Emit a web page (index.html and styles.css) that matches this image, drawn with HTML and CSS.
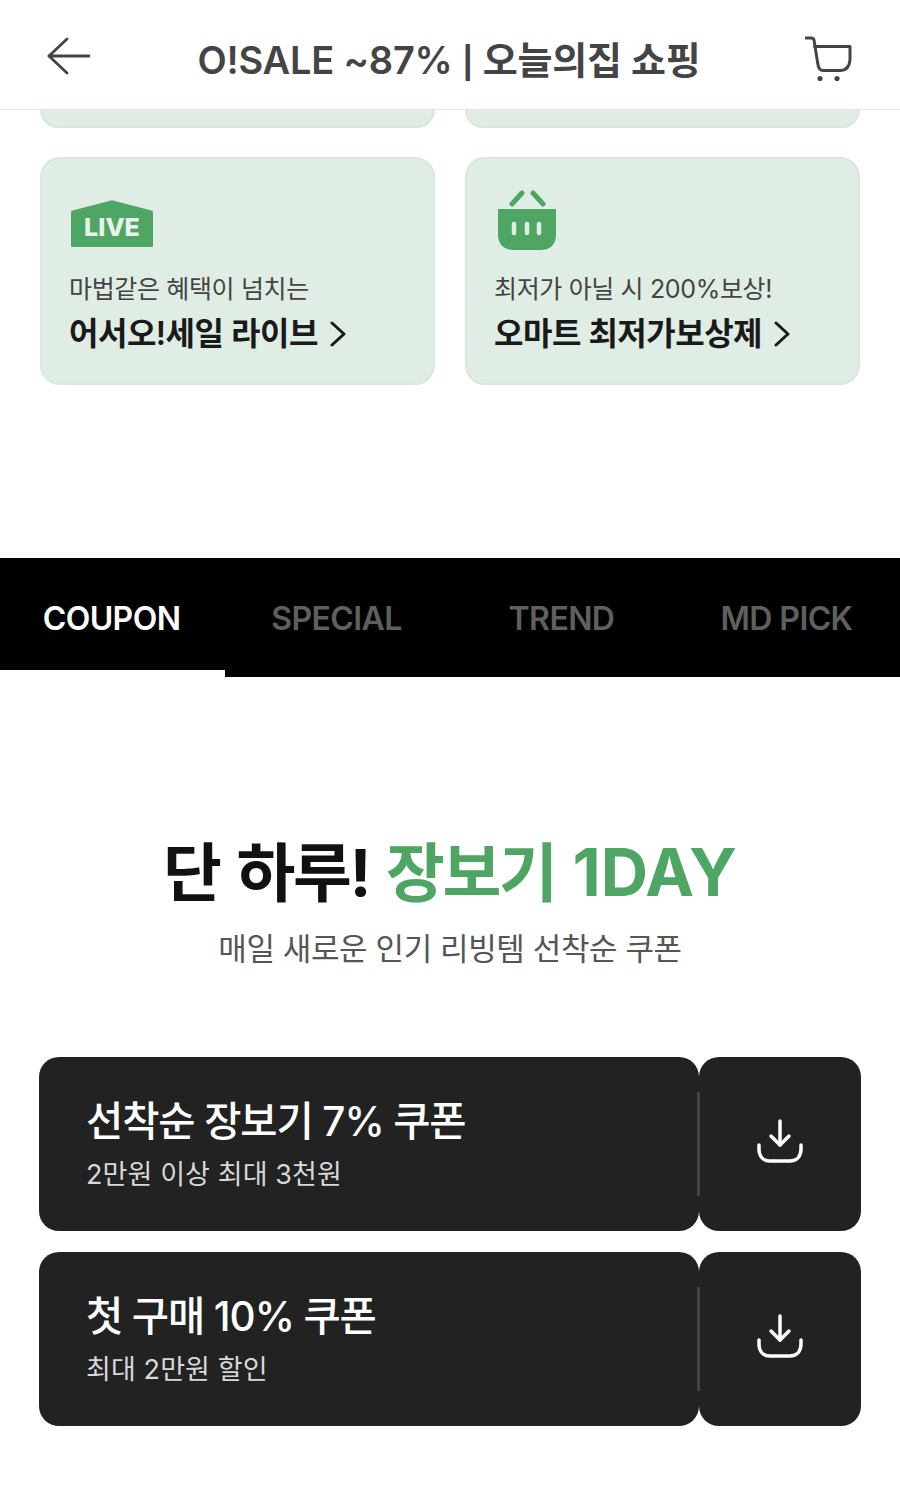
FILE: index.html
```html
<!DOCTYPE html>
<html lang="ko">
<head>
    <meta charset="UTF-8">
    <meta name="viewport" content="width=device-width, initial-scale=1.0">
    <title>O!SALE ~87% | 오늘의집 쇼핑</title>
    <link rel="stylesheet" href="styles.css">
</head>
<body>
    <!-- Top bar -->
    <header class="topbar">
        <svg class="icon-back" width="46" height="40" viewBox="0 0 46 40" fill="none" stroke="#444" stroke-width="2.800" stroke-linecap="round" stroke-linejoin="round">
            <path d="M42 21H2"/>
            <path d="M20 4L2 21l18 17"/>
        </svg>
        <h1 class="topbar-title">O!SALE ~87% <span class="title-pipe">|</span> 오늘의집 쇼핑</h1>
        <svg class="icon-cart" width="48" height="48" viewBox="0 0 48 48" fill="none" stroke="#444" stroke-width="3" stroke-linecap="round" stroke-linejoin="round">
            <path d="M9.500 13.500H45V27Q44 37 36 37.500H18Q14 37.500 13 32L9 7Q8.500 5 6 5H1"/>
            <circle cx="15" cy="45.500" r="2.600" fill="#444" stroke="none"/>
            <circle cx="32" cy="45.500" r="2.600" fill="#444" stroke="none"/>
        </svg>
    </header>

    <!-- Benefit cards, first row is scrolled under the top bar -->
    <section class="benefits">
        <div class="benefit-cut">
            <div class="benefit-stub"></div>
            <div class="benefit-stub"></div>
        </div>
        <div class="benefit-row">
            <a class="benefit-card">
                <div class="benefit-icon">
                    <svg class="icon-live" width="82" height="47" viewBox="0 0 82 47">
                        <path d="M40 .5L1.500 10.500C.5 10.800 0 11.300 0 12.500V45.500C0 46.500.5 47 1.500 47H80.500C81.500 47 82 46.500 82 45.500V12.500C82 11.300 81.500 10.800 80.500 10.500L42 .5C41.300.3 40.700.3 40 .5Z" fill="#4fa564"/>
                        <text class="live-text" x="41" y="36" text-anchor="middle">LIVE</text>
                    </svg>
                </div>
                <p class="benefit-sub">마법같은 혜택이 넘치는</p>
                <p class="benefit-name">어서오!세일 라이브
                    <svg class="icon-chevron" width="16" height="26" viewBox="0 0 16 26" fill="none" stroke="#1a1a1a" stroke-width="3" stroke-linecap="round" stroke-linejoin="round"><path d="M2 2l12 11L2 24"/></svg>
                </p>
            </a>
            <a class="benefit-card">
                <div class="benefit-icon">
                    <svg class="icon-basket" width="60" height="61" viewBox="0 0 60 61">
                        <path d="M15 14L25 3M46 14L36 3" stroke="#4fa564" stroke-width="5" stroke-linecap="round" fill="none"/>
                        <path d="M1 19H59V45C59 54 53 60 44 60H16C7 60 1 54 1 45Z" fill="#4fa564"/>
                        <path d="M17 34V43M30 34V43M42 34V43" stroke="#e0ede5" stroke-width="4.500" stroke-linecap="round" fill="none"/>
                    </svg>
                </div>
                <p class="benefit-sub">최저가 아닐 시 200%보상!</p>
                <p class="benefit-name">오마트 최저가보상제
                    <svg class="icon-chevron" width="16" height="26" viewBox="0 0 16 26" fill="none" stroke="#1a1a1a" stroke-width="3" stroke-linecap="round" stroke-linejoin="round"><path d="M2 2l12 11L2 24"/></svg>
                </p>
            </a>
        </div>
    </section>

    <!-- Tabs -->
    <nav class="tabs">
        <a class="tab active">COUPON</a>
        <a class="tab">SPECIAL</a>
        <a class="tab">TREND</a>
        <a class="tab">MD PICK</a>
    </nav>

    <!-- Coupons -->
    <section class="coupons">
        <h2 class="coupons-title">단 하루! <span class="green">장보기 <span class="latin">1DAY</span></span></h2>
        <p class="coupons-sub">매일 새로운 인기 리빙템 선착순 쿠폰</p>

        <div class="coupon">
            <div class="coupon-info">
                <p class="coupon-name">선착순 장보기 7% 쿠폰</p>
                <p class="coupon-desc">2만원 이상 최대 3천원</p>
            </div>
            <button class="coupon-btn">
                <svg width="46" height="46" viewBox="0 0 46 46" fill="none" stroke="#fff" stroke-width="3.500" stroke-linecap="round" stroke-linejoin="round">
                    <path d="M23 3V27"/>
                    <path d="M14 18l9 9 9-9"/>
                    <path d="M2 27V31C2 38 6 43 13 43H33C40 43 44 38 44 31V27"/>
                </svg>
            </button>
        </div>

        <div class="coupon">
            <div class="coupon-info">
                <p class="coupon-name">첫 구매 10% 쿠폰</p>
                <p class="coupon-desc">최대 2만원 할인</p>
            </div>
            <button class="coupon-btn">
                <svg width="46" height="46" viewBox="0 0 46 46" fill="none" stroke="#fff" stroke-width="3.500" stroke-linecap="round" stroke-linejoin="round">
                    <path d="M23 3V27"/>
                    <path d="M14 18l9 9 9-9"/>
                    <path d="M2 27V31C2 38 6 43 13 43H33C40 43 44 38 44 31V27"/>
                </svg>
            </button>
        </div>
    </section>
</body>
</html>
```

FILE: styles.css
```css
* {
    box-sizing: border-box;
}
body {
    margin: 0;
    background: #fff;
    font-family: Inter, "Noto Sans CJK KR", sans-serif;
    color: #1a1a1a;
}
p, h1, h2 {
    margin: 0;
}
.topbar {
    height: 110px;
    display: flex;
    align-items: center;
    justify-content: space-between;
    padding: 0 47px;
    border-bottom: 1px solid #e4e4e4;
}
.icon-back {
    flex: none;
}
.icon-cart {
    flex: none;
    margin-top: 4px;
}
.topbar-title {
    font-size: 38px;
    font-weight: 600;
    color: #444;
    letter-spacing: -0.2px;
    white-space: nowrap;
    margin-top: 5px;
}
.title-pipe {
    font-size: 31px;
    font-weight: 700;
}
.benefits {
    padding: 0 40px;
    height: 448px;
}
.benefit-cut {
    display: grid;
    grid-template-columns: 395px 395px;
    gap: 30px;
    height: 18px;
}
.benefit-stub {
    background: #e0ede5;
    border: 2px solid #d9e8df;
    border-top: none;
    border-radius: 0 0 20px 20px;
}
.benefit-row {
    display: grid;
    grid-template-columns: 395px 395px;
    gap: 30px;
    margin-top: 29px;
}
.benefit-card {
    height: 228px;
    background: #e0ede5;
    border: 2px solid #d9e8df;
    border-radius: 20px;
    padding: 31px 27px 0;
    display: block;
}
.benefit-icon {
    height: 61px;
    display: flex;
    align-items: flex-end;
}
.icon-live {
    margin-left: 2px;
    margin-bottom: 4px;
}
.live-text {
    font-size: 25px;
    font-weight: 800;
    letter-spacing: 0;
    fill: #e8f3ec;
}
.icon-basket {
    margin-left: 3px;
}
.benefit-sub {
    font-size: 25px;
    line-height: 36px;
    margin-top: 20px;
    color: #444;
    letter-spacing: -0.35px;
    white-space: nowrap;
}
.benefit-name {
    font-size: 32px;
    line-height: 44px;
    font-weight: 600;
    margin-top: 5px;
    letter-spacing: -0.5px;
    color: #1a1a1a;
    white-space: nowrap;
    display: flex;
    align-items: center;
    gap: 12px;
}
.tabs {
    height: 119px;
    background: #000;
    display: grid;
    grid-template-columns: repeat(4, 225px);
}
.tab {
    height: 119px;
    display: flex;
    align-items: center;
    justify-content: center;
    padding: 2px 2px 0 0;
    font-size: 32px;
    font-weight: 600;
    color: #5f5f5f;
    letter-spacing: -0.6px;
}
.tab.active {
    color: #fff;
    padding-top: 9px;
    border-bottom: 7px solid #fff;
}
.coupons {
    padding: 156px 39px 0;
}
.coupons-title {
    font-size: 64px;
    line-height: 80px;
    font-weight: 700;
    text-align: center;
    letter-spacing: -2.300px;
    word-spacing: 4px;
    color: #111;
    white-space: nowrap;
}
.latin {
    font-size: 65.500px;
    letter-spacing: 0;
}
.green {
    color: #4fa564;
}
.coupons-sub {
    font-size: 31px;
    line-height: 44px;
    margin-top: 14px;
    text-align: center;
    color: #555;
    letter-spacing: -0.4px;
}
.coupon {
    display: flex;
    height: 174px;
    margin-top: 21px;
}
.coupons-sub + .coupon {
    margin-top: 86px;
}
.coupon-info {
    width: 660px;
    background: #222;
    border-radius: 20px;
    padding: 39px 47px 0;
}
.coupon-name {
    font-size: 40.500px;
    line-height: 52px;
    font-weight: 500;
    color: #fff;
    letter-spacing: -1.100px;
}
.coupon-desc {
    font-size: 27px;
    line-height: 38px;
    margin-top: 8px;
    color: #d8d8d8;
    letter-spacing: 0.1px;
}
.coupon-btn {
    position: relative;
    width: 162px;
    background: #222;
    border: none;
    border-radius: 20px;
    padding: 0;
    display: flex;
    align-items: center;
    justify-content: center;
}
.coupon-btn svg {
    margin-bottom: 6px;
}
.coupon-btn::before {
    content: "";
    position: absolute;
    left: -2px;
    top: 35px;
    bottom: 35px;
    width: 3px;
    background: #444;
}
```
